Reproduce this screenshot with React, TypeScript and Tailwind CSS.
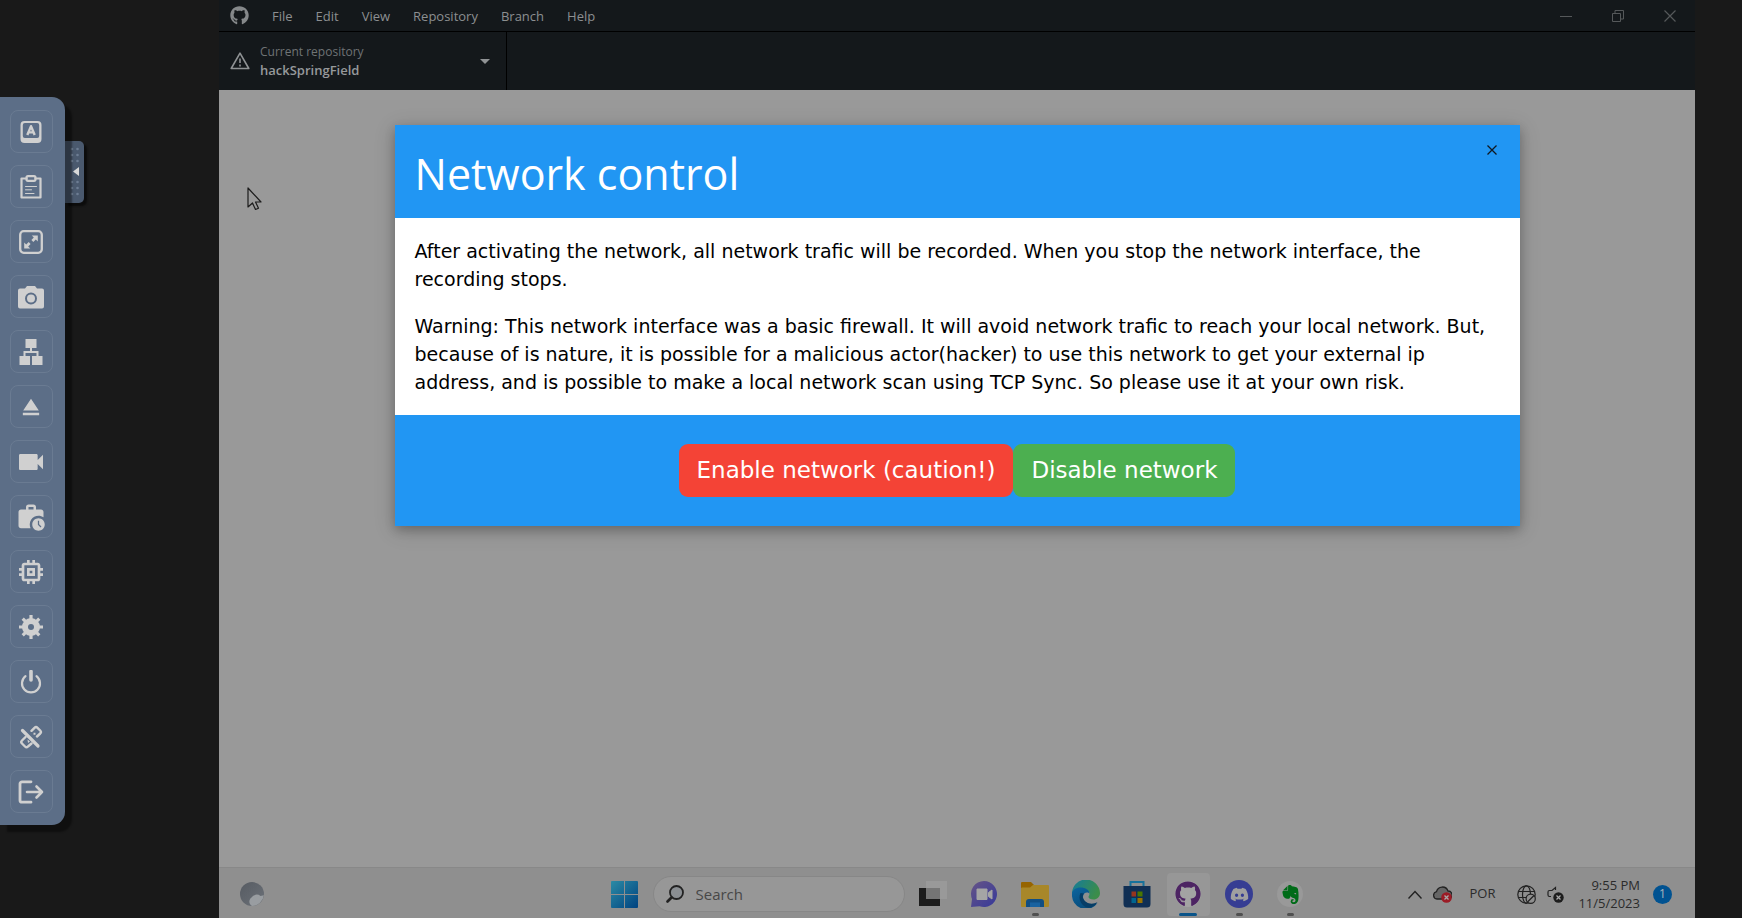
import React from "react";
import { FaDiscord, FaGithub } from "react-icons/fa";
import { MdEject, MdMemory, MdVideocam, MdWorkHistory } from "react-icons/md";
import { SiEvernote } from "react-icons/si";

type Tool = { label: string; icon: React.ReactNode };

const stroke = {
  fill: "none",
  stroke: "currentColor",
  strokeWidth: 2.2,
  strokeLinecap: "round" as const,
  strokeLinejoin: "round" as const,
};

const tools: Tool[] = [
  {
    label: "Keyboard",
    icon: (
      <svg viewBox="0 0 24 24" className="size-6">
        <path fill="currentColor" fillRule="evenodd" d="M5.500 1h13A4 4 0 0 1 22.500 5v14a4 4 0 0 1-4 4h-13a4 4 0 0 1-4-4V5a4 4 0 0 1 4-4zm.3 2A2 2 0 0 0 3.800 5v11a2 2 0 0 0 2 2h12.400a2 2 0 0 0 2-2V5a2 2 0 0 0-2-2z" />
        <path d="M8.300 15 12 6.200l3.700 8.800M9.800 12.400h4.400" {...stroke} strokeWidth={2.400} strokeLinecap="butt" />
      </svg>
    ),
  },
  {
    label: "Clipboard",
    icon: (
      <svg viewBox="0 0 24 24" className="size-6">
        <path d="M7.500 3.500H2.500v19h19v-19h-5" {...stroke} />
        <rect x="7.500" y="1.200" width="9" height="4.600" rx="1.500" {...stroke} />
        <path d="M6.500 11.500h11M6.500 14.800h6M6.500 18.500h8.500" {...stroke} strokeWidth={1} />
      </svg>
    ),
  },
  {
    label: "Full screen",
    icon: (
      <svg viewBox="0 0 24 24" className="size-6">
        <rect x="1.200" y="1.200" width="21.600" height="21.600" rx="3.500" {...stroke} strokeWidth={2.300} />
        <path fill="currentColor" d="M12.800 5.500h6v6l-2-2-2.500 2.400-1.900-1.900 2.400-2.500zM5.200 12.500v6h6l-2-2 2.400-2.500-1.900-1.900-2.500 2.400z" />
      </svg>
    ),
  },
  {
    label: "Screenshot",
    icon: (
      <svg viewBox="0 0 26 24" className="h-6 w-[26px]">
        <path fill="currentColor" d="M2 3.500h5L9 1h8l2 2.500h5a2 2 0 0 1 2 2v16a2 2 0 0 1-2 2H2a2 2 0 0 1-2-2v-16a2 2 0 0 1 2-2z" />
        <circle cx="13" cy="13.500" r="5" fill="none" stroke="#5c6e87" strokeWidth="2" />
      </svg>
    ),
  },
  {
    label: "Network",
    icon: (
      <svg viewBox="0 0 24 26" className="h-[26px] w-6">
        <path fill="currentColor" d="M6.500 0h11v9h-11zM.5 17H11v9H.5zM13 17h10.500v9H13z" />
        <path d="M12 8v5M5.500 17v-4h13v4" {...stroke} strokeWidth={2} strokeLinejoin="miter" />
      </svg>
    ),
  },
  { label: "Eject", icon: <MdEject className="size-7" /> },
  { label: "Record video", icon: <MdVideocam className="size-8" /> },
  { label: "Work history", icon: <MdWorkHistory className="size-[30px]" /> },
  { label: "Hardware", icon: <MdMemory className="size-8" /> },
  {
    label: "Settings",
    icon: (
      <svg viewBox="0 0 24 24" className="size-6">
        <path d="M12 0v24M0 12h24M3.700 3.700l16.600 16.600M20.300 3.700 3.700 20.300" {...stroke} strokeWidth={3.200} strokeLinecap="butt" />
        <circle cx="12" cy="12" r="9" fill="currentColor" />
        <circle cx="12" cy="12" r="3" fill="#5c6e87" />
      </svg>
    ),
  },
  {
    label: "Power",
    icon: (
      <svg viewBox="0 0 24 24" className="size-6">
        <path d="M6.500 6.200a9 9 0 1 0 11 0" {...stroke} />
        <path d="M12 1.500v8.500" {...stroke} strokeWidth={3.600} />
      </svg>
    ),
  },
  {
    label: "Disconnect",
    icon: (
      <svg viewBox="0 0 24 24" className="size-6">
        <path d="M12.500 5.800 15.500 2.800q1.500-1.500 3 0l2.700 2.700q1.500 1.500 0 3L18 11.500M6.500 12 3 15.500q-1.500 1.500 0 3L6 21.500q1.500 1.500 3 0l3.500-3" {...stroke} strokeWidth={2.400} />
        <path d="M3.500 5.500 19 21" {...stroke} strokeWidth={3.200} />
        <path fill="currentColor" d="M14.500 7.800h2v2h-2zM8.500 14.500l2.500 2-2 1.500z" />
      </svg>
    ),
  },
  {
    label: "Log out",
    icon: (
      <svg viewBox="0 0 26 24" className="h-6 w-[26px]">
        <path d="M13 1.800H4a2 2 0 0 0-2 2v16.400a2 2 0 0 0 2 2h9" {...stroke} strokeWidth={2.800} />
        <path d="M9 12h15M18.500 6.500 24 12l-5.500 5.500" {...stroke} strokeWidth={2.600} />
      </svg>
    ),
  },
];

function Sidebar() {
  return (
    <aside className="absolute top-[97px] left-0 z-10 flex items-start">
      <nav aria-label="Virtual machine tools" className="relative z-10 flex w-[65px] flex-col gap-3 rounded-r-[13px] bg-[#5c6e87] pt-[13px] pb-3 pl-[10px] shadow-[7px_7px_2px_rgba(0,0,0,0.4)]">
        {tools.map((t) => (
          <button key={t.label} type="button" aria-label={t.label} className="flex h-[43px] w-[43px] items-center justify-center rounded-[8px] border border-[#6a7b92] pr-px text-[#d0d0d0]">
            {t.icon}
          </button>
        ))}
      </nav>
      <button type="button" aria-label="Collapse tools" className="mt-11 flex h-[62px] w-[19px] items-center justify-end rounded-r-[5px] bg-[#4a596e] pr-1 shadow-[3px_3px_2px_#0c0c0c]">
        <svg viewBox="0 0 10 52" className="h-[52px] w-[10px]" fill="#6d7d93">
          {[3, 9, 15, 36, 42, 48].map((y) => (
            <g key={y}>
              <circle cx="2" cy={y} r="1.300" />
              <circle cx="7.500" cy={y} r="1.300" />
            </g>
          ))}
          <path fill="#d8d8d8" d="M9 21v9l-6-4.500z" />
        </svg>
      </button>
    </aside>
  );
}

function AppHeader() {
  return (
    <header className="bg-[#14181b] font-['Open_Sans',sans-serif] text-[#8c8f91]">
      <div className="flex h-8 items-center border-b border-black pl-[11px] text-[13px]">
        <FaGithub className="mr-[23px] size-[19px] text-[#85888a]" />
        <nav className="flex flex-1 gap-[23px] pt-[3px]">
          {["File", "Edit", "View", "Repository", "Branch", "Help"].map((m) => (
            <button key={m} type="button">{m}</button>
          ))}
        </nav>
        <div className="flex gap-10 pr-[19px] text-[#55585a]">
          <button type="button" aria-label="Minimize">
            <svg viewBox="0 0 12 12" className="size-3" stroke="currentColor"><path d="M0 6.500h12" /></svg>
          </button>
          <button type="button" aria-label="Restore">
            <svg viewBox="0 0 12 12" className="size-3" fill="none" stroke="currentColor"><path d="M.5 3.500h8v8h-8zM3 3V.5h8.500V9H9" /></svg>
          </button>
          <button type="button" aria-label="Close window">
            <svg viewBox="0 0 12 12" className="size-3" stroke="currentColor" strokeWidth="1.200"><path d="m.5.5 11 11m0-11-11 11" /></svg>
          </button>
        </div>
      </div>
      <div className="flex h-[58px]">
        <button type="button" className="flex w-[288px] items-center border-r border-black pr-4 pl-[11px] text-left">
          <svg viewBox="0 0 20 18" className="mr-[10px] h-[18px] w-5 text-[#8f9294]" fill="none" stroke="currentColor" strokeWidth="1.600" strokeLinejoin="round">
            <path d="M10 1.200 18.800 16.500H1.200zM10 6.500v4.500M10 12.500v2" />
          </svg>
          <span className="flex-1 leading-[18px]">
            <span className="block text-[12px] text-[#6f7375]">Current repository</span>
            <span className="block text-[13px] font-semibold text-[#96999b]">hackSpringField</span>
          </span>
          <svg viewBox="0 0 10 5" className="h-[5px] w-[10px]" fill="#909395"><path d="M0 0h10L5 5z" /></svg>
        </button>
      </div>
    </header>
  );
}

function TaskApp({ label, running, active, children }: { label: string; running?: boolean; active?: boolean; children: React.ReactNode }) {
  return (
    <button
      type="button"
      aria-label={label}
      className={`relative flex h-[43px] w-[43px] items-center justify-center rounded-[4px] ${active ? "bg-[#979797]" : ""}`}
    >
      {children}
      {running && <span className={`absolute bottom-0 h-[3px] rounded-full ${active ? "w-[18px] bg-[#0a5489]" : "w-[7px] bg-[#505050]"}`} />}
    </button>
  );
}

function Taskbar() {
  return (
    <footer className="grid h-[51px] shrink-0 grid-cols-[1fr_auto_1fr] items-center border-t border-[#888888] bg-[#8f8f8f] pt-[2px] font-['Open_Sans',sans-serif] text-[#2b2b2b]">
      <button type="button" aria-label="Weather" className="ml-5 w-[26px]">
        <svg viewBox="0 0 26 26" className="size-[26px]">
          <defs>
            <linearGradient id="moon" x1="0" y1="0" x2="1" y2="1"><stop offset="0" stopColor="#565b62" /><stop offset="1" stopColor="#6c7178" /></linearGradient>
          </defs>
          <circle cx="13" cy="13" r="12" fill="url(#moon)" />
          <path d="M13 25a5 5 0 0 1-.5-8.500 6 6 0 0 1 9-1.500l3.300-.8A12 12 0 0 1 13 25z" fill="#999da1" />
        </svg>
      </button>
      <div className="flex items-center">
        <button type="button" aria-label="Start" className="flex w-[51px] justify-center">
          <svg viewBox="0 0 27 27" className="size-[27px]">
            <defs>
              <linearGradient id="win" gradientUnits="userSpaceOnUse" x1="0" y1="0" x2="27" y2="27"><stop offset="0" stopColor="#2b8ba5" /><stop offset="1" stopColor="#004280" /></linearGradient>
            </defs>
            <path fill="url(#win)" d="M0 1a1 1 0 0 1 1-1h12v13H0zM14 0h12a1 1 0 0 1 1 1v12H14zM0 14h13v13H1a1 1 0 0 1-1-1zM14 14h13v12a1 1 0 0 1-1 1H14z" />
          </svg>
        </button>
        <label className="mx-[3px] flex h-9 w-[252px] items-center rounded-full border border-[#878787] bg-[#979797] pl-3">
          <svg viewBox="0 0 18 18" className="mr-3 size-[18px]" fill="none" stroke="#222" strokeWidth="1.800" strokeLinecap="round">
            <circle cx="10.500" cy="7.500" r="6.500" fill="#8a8e92" /><path d="m5.500 12.500-4 4" strokeWidth="2.600" />
          </svg>
          <input type="text" aria-label="Search" placeholder="Search" className="h-6 w-40 bg-transparent text-[15px] leading-6 outline-none placeholder:text-[#484848]" />
        </label>
        <div className="flex gap-2 px-1">
          <TaskApp label="Task view">
            <svg viewBox="0 0 28 28" className="size-7">
              <path d="M0 8h21v18H0z" fill="#1c1c1c" /><path d="M7 1h21v18H7z" fill="#999999" /><path d="M7 8h14v11H7z" fill="#757575" />
            </svg>
          </TaskApp>
          <TaskApp label="Chat">
            <svg viewBox="0 0 28 28" className="size-7">
              <defs><linearGradient id="chat" x1="0" y1="0" x2="1" y2="1"><stop offset="0" stopColor="#665486" /><stop offset="1" stopColor="#36399a" /></linearGradient></defs>
              <path d="M14 1a13 13 0 1 1-4.500 25.200L1 27l1-8A13 13 0 0 1 14 1z" fill="url(#chat)" />
              <path d="M7 9h10v10.500H7zM18.500 12.500 22 10v9l-3.500-2.500z" fill="#a5a5a5" stroke="#a5a5a5" strokeLinejoin="round" />
            </svg>
          </TaskApp>
          <TaskApp label="File Explorer" running>
            <svg viewBox="0 0 28 28" className="size-7">
              <path d="M0 3a1 1 0 0 1 1-1h9l3 3v6H0z" fill="#966400" /><path d="M1 7.500h8L12 5h15a1 1 0 0 1 1 1v20a1 1 0 0 1-1 1H1a1 1 0 0 1-1-1V8z" fill="#a88729" />
              <path d="M5 27v-5a3 3 0 0 1 3-3h12a3 3 0 0 1 3 3v5z" fill="#104e83" /><path d="M9 22.500h10v4.500H9z" fill="#1862a0" />
            </svg>
          </TaskApp>
          <TaskApp label="Edge">
            <svg viewBox="0 0 28 28" className="size-7">
              <defs>
                <linearGradient id="edgeTop" x1="0" y1="0" x2="1" y2=".4"><stop offset="0" stopColor="#147b9c" /><stop offset="1" stopColor="#3b8d4a" /></linearGradient>
                <linearGradient id="edgeLow" x1="0" y1="0" x2=".6" y2="1"><stop offset="0" stopColor="#0b65a0" /><stop offset="1" stopColor="#074a78" /></linearGradient>
              </defs>
              <path d="M0 14A14 14 0 0 1 28 13c0 4-3 6.500-6.500 6.500-3 0-5-1-5-2.500 0-1 1-1.500 1-3.500 0-2.500-2.500-4.500-6-4.500C6 9 1 11 0 15z" fill="url(#edgeTop)" />
              <path d="M0 14c0-4 4-6.500 8.500-6.500 5 0 9 2.500 9 6-1.500-2-6.500-1.500-6.500 3.500 0 4 5 7.500 9 7.500 2.500 0 4.500-.8 5.500-1.500A14 14 0 0 1 0 14z" fill="url(#edgeLow)" />
              <path d="M8.500 13c-3 6 1 14 8.500 14.800A14 14 0 0 0 25.500 22c-6 3.500-13 1-14.500-4-.5-2 0-3.500 1-4.500z" fill="#063d66" />
            </svg>
          </TaskApp>
          <TaskApp label="Store">
            <svg viewBox="0 0 28 28" className="size-7">
              <path d="M7.500 7V2h13v5" fill="none" stroke="#16719b" strokeWidth="2" />
              <path d="M.5 6h27v18a3.500 3.500 0 0 1-3.500 3.500H4A3.500 3.500 0 0 1 .5 24z" fill="#102f54" />
              <path d="M8.500 11.500H13v5H8.500z" fill="#98341e" /><path d="M14.500 11.500h5v5h-5z" fill="#4b7700" />
              <path d="M8.500 18H13v5H8.500z" fill="#006690" /><path d="M14.500 18h5v5h-5z" fill="#997200" />
            </svg>
          </TaskApp>
          <TaskApp label="GitHub Desktop" running active>
            <span className="flex size-[26px] items-center justify-center rounded-full bg-[#a3a3a3]">
              <FaGithub className="size-[26px] text-[#4d2463]" />
            </span>
          </TaskApp>
          <TaskApp label="Discord" running>
            <span className="flex size-7 items-center justify-center rounded-full bg-[#363d93]">
              <FaDiscord className="size-[19px] text-[#a0a0a0]" />
            </span>
          </TaskApp>
          <TaskApp label="Evernote" running>
            <span className="flex size-[26px] items-center justify-center rounded-full bg-[#999]">
              <SiEvernote className="size-[19px] text-[#006b18]" />
            </span>
          </TaskApp>
        </div>
      </div>
      <div className="flex items-center justify-end pr-[23px]">
        <button type="button" aria-label="Show hidden icons" className="mr-[11px]">
          <svg viewBox="0 0 14 9" className="h-[9px] w-[14px]" fill="none" stroke="#222" strokeWidth="1.400"><path d="m.5 8.500 6.500-7 6.500 7" /></svg>
        </button>
        <svg viewBox="0 0 19 17" className="mr-[17px] h-[17px] w-[19px]">
          <path d="M4 13a3.700 3.700 0 0 1-.5-7.300A6 6 0 0 1 15 5a4 4 0 0 1 2 7.500l-6 .5z" fill="#666" stroke="#222" strokeWidth="1.300" />
          <circle cx="13.500" cy="11.500" r="5.300" fill="#9b1c26" /><path d="m11.500 9.500 4 4m0-4-4 4" stroke="#aaa" strokeWidth="1.300" />
        </svg>
        <span className="mr-[22px] text-[13px]">POR</span>
        <svg viewBox="0 0 19 19" className="mr-[11px] size-[19px]" fill="none" stroke="#222" strokeWidth="1.200">
          <circle cx="9.500" cy="9.500" r="8.700" /><ellipse cx="9.500" cy="9.500" rx="4" ry="8.700" /><path d="M1.500 6.500h16M1.500 12.500H10" />
          <circle cx="13.700" cy="13.700" r="4.600" fill="#8f8f8f" /><path d="m10.500 17 6.500-6.500" />
        </svg>
        <svg viewBox="0 0 17 17" className="mr-[14px] size-[17px]" fill="none" stroke="#222" strokeWidth="1.200">
          <path d="M8.500 4V1.500L5 4.500H2.500Q1 4.500 1 6v3q0 1.500 1.500 1.500H4" /><circle cx="11.500" cy="11.500" r="5.200" fill="#1d1d1d" stroke="none" />
          <path d="m9.500 9.500 4 4m0-4-4 4" stroke="#aaa" />
        </svg>
        <div className="mr-[13px] text-right text-[13px] leading-[18px]">
          <div>9:55 PM</div>
          <div>11/5/2023</div>
        </div>
        <span className="flex size-[19px] items-center justify-center rounded-full bg-[#005291] text-[12px] text-[#a8b4bd]">1</span>
      </div>
    </footer>
  );
}

function NetworkDialog() {
  return (
    <div role="dialog" aria-labelledby="dialog-title" className="relative w-full max-w-[1125px] bg-white font-['DejaVu_Sans',Verdana,sans-serif] text-black shadow-[0_4px_10px_rgba(0,0,0,0.2),0_4px_20px_rgba(0,0,0,0.19)]">
      <header className="bg-[#2196f3] px-5 pt-[17px] pb-3">
        <h2 id="dialog-title" className="font-['Open_Sans',sans-serif] text-[43px] leading-[64px] text-white">Network control</h2>
        <button type="button" aria-label="Close" className="absolute top-0 right-0 flex h-[49px] w-14 items-center justify-center">
          <svg viewBox="0 0 10 10" className="size-[10px]" stroke="#101820" strokeWidth="1.300"><path d="m.5.5 9 9m0-9-9 9" /></svg>
        </button>
      </header>
      <div className="space-y-[19px] px-5 pt-[19px] pb-[19px] text-[19px] leading-[28px]">
        <p>After activating the network, all network trafic will be recorded. When you stop the network interface, the recording stops.</p>
        <p>
          Warning: This network interface was a basic firewall. It will avoid network trafic to reach your local network. But, because of is nature, it is possible for a malicious actor(hacker) to use this network to get your external ip address, and is possible to make a local network scan using TCP Sync. So please use it at your own risk.
        </p>
      </div>
      <footer className="flex justify-center bg-[#2196f3] pt-[29px] pb-[29px] text-[23px] text-white">
        <button type="button" className="h-[53px] rounded-[9px] bg-[#f44336] px-[18px]">Enable network (caution!)</button>
        <button type="button" className="h-[53px] rounded-[9px] bg-[#4caf50] px-[18px]">Disable network</button>
      </footer>
    </div>
  );
}

export default function App() {
  return (
    <div className="relative flex min-h-screen bg-[#191919]">
      <Sidebar />
      <main className="relative mr-[47px] ml-[219px] flex flex-1 flex-col bg-[#999999]">
        <AppHeader />
        <div className="flex-1">
          <svg viewBox="0 0 16 24" className="mt-[97px] ml-7 h-6 w-4" fill="#999" stroke="#1c1c1c" strokeWidth="1.200" strokeLinejoin="round">
            <path d="M1 1v19l4.500-4 3 6.500 3-1.300-3-6.200H14z" />
          </svg>
        </div>
        <Taskbar />
        <div className="absolute inset-x-0 top-[125px] flex justify-center">
          <NetworkDialog />
        </div>
      </main>
    </div>
  );
}
